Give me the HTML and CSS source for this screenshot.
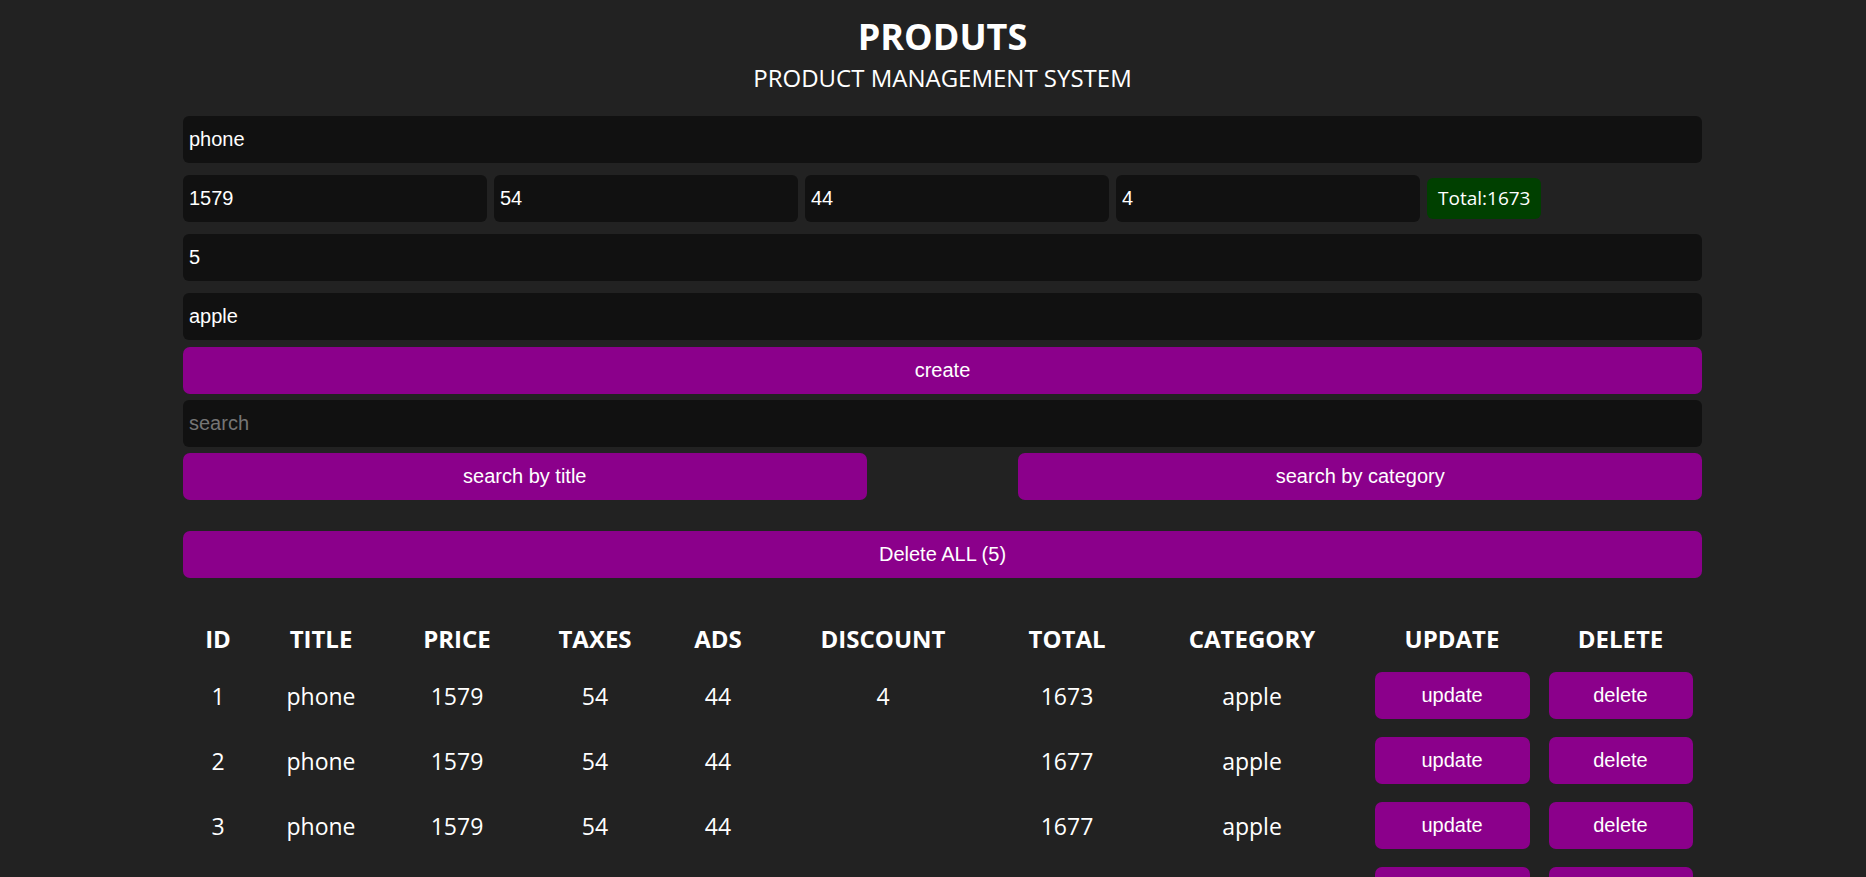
FILE: index.html
```html
<!DOCTYPE html>
<html lang="en">
<head>
<meta charset="UTF-8">
<title>CRUD</title>
<link rel="stylesheet" href="styles.css">
</head>
<body>
<div class="crud">
  <div class="head">
    <h1 class="title">PRODUTS</h1>
    <p class="subtitle">PRODUCT MANAGEMENT SYSTEM</p>
  </div>
  <div class="inputs">
    <input class="field" type="text" value="phone" placeholder="title">
    <div class="price">
      <input class="field" type="number" value="1579" placeholder="price">
      <input class="field" type="number" value="54" placeholder="taxes">
      <input class="field" type="number" value="44" placeholder="ads">
      <input class="field" type="number" value="4" placeholder="discount">
      <small class="total">Total:1673</small>
    </div>
    <input class="field" type="number" value="5" placeholder="count">
    <input class="field" type="text" value="apple" placeholder="category">
  </div>
  <div class="actions">
    <button class="btn">create</button>
    <input class="field" type="text" placeholder="search">
    <div class="search-btns">
      <button class="btn">search by title</button>
      <button class="btn">search by category</button>
    </div>
  </div>
  <div class="delete-all">
    <button class="btn">Delete ALL (5)</button>
  </div>
  <table class="products">
    <colgroup>
      <col class="c-id"><col class="c-title"><col class="c-price"><col class="c-taxes"><col class="c-ads"><col class="c-discount"><col class="c-total"><col class="c-category"><col class="c-update"><col class="c-delete">
    </colgroup>
    <thead>
      <tr>
        <th>ID</th><th>TITLE</th><th>PRICE</th><th>TAXES</th><th>ADS</th><th>DISCOUNT</th><th>TOTAL</th><th>CATEGORY</th><th>UPDATE</th><th>DELETE</th>
      </tr>
    </thead>
    <tbody>
      <tr>
        <td>1</td><td>phone</td><td>1579</td><td>54</td><td>44</td><td>4</td><td>1673</td><td>apple</td>
        <td><button class="btn">update</button></td><td><button class="btn">delete</button></td>
      </tr>
      <tr>
        <td>2</td><td>phone</td><td>1579</td><td>54</td><td>44</td><td></td><td>1677</td><td>apple</td>
        <td><button class="btn">update</button></td><td><button class="btn">delete</button></td>
      </tr>
      <tr>
        <td>3</td><td>phone</td><td>1579</td><td>54</td><td>44</td><td></td><td>1677</td><td>apple</td>
        <td><button class="btn">update</button></td><td><button class="btn">delete</button></td>
      </tr>
      <tr>
        <td>4</td><td>phone</td><td>1579</td><td>54</td><td>44</td><td></td><td>1677</td><td>apple</td>
        <td><button class="btn">update</button></td><td><button class="btn">delete</button></td>
      </tr>
      <tr>
        <td>5</td><td>phone</td><td>1579</td><td>54</td><td>44</td><td></td><td>1677</td><td>apple</td>
        <td><button class="btn">update</button></td><td><button class="btn">delete</button></td>
      </tr>
    </tbody>
  </table>
</div>
</body>
</html>
```
FILE: styles.css
```css
* {
  box-sizing: border-box;
}

html, body {
  margin: 0;
  padding: 0;
  background: #222222;
  color: #ffffff;
  font-family: "Open Sans", "Noto Sans", sans-serif;
  overflow: hidden;
}

.crud {
  width: 1519px;
  margin-left: 183px;
}

.head {
  padding-top: 12px;
  text-align: center;
}

.title {
  margin: 0;
  font-size: 36px;
  line-height: 49px;
  font-weight: 700;
}

.subtitle {
  margin: 0;
  font-size: 24px;
  line-height: 33px;
  font-weight: 400;
}

.inputs {
  margin-top: 22px;
  display: flex;
  flex-direction: column;
  gap: 12px;
}

.field {
  display: block;
  width: 100%;
  height: 47px;
  border: none;
  outline: none;
  border-radius: 6px;
  background: #111111;
  color: #ffffff;
  padding: 0 6px;
  font-family: "Liberation Sans", Arial, sans-serif;
  font-size: 20px;
}

.field::placeholder {
  color: #757575;
}

.field::-webkit-outer-spin-button,
.field::-webkit-inner-spin-button {
  -webkit-appearance: none;
  margin: 0;
}

.price {
  display: flex;
  align-items: center;
  gap: 7px;
}

.price .field {
  width: 304px;
  flex: none;
}

.total {
  display: inline-block;
  height: 41px;
  line-height: 41px;
  padding: 0 11px;
  border-radius: 6px;
  background: #004000;
  color: #ffffff;
  font-size: 19px;
}

.actions {
  margin-top: 7px;
  display: flex;
  flex-direction: column;
  gap: 6px;
}

.btn {
  display: block;
  width: 100%;
  height: 47px;
  border: none;
  border-radius: 7px;
  background: #8b008b;
  color: #ffffff;
  font-family: "Liberation Sans", Arial, sans-serif;
  font-size: 20px;
  cursor: pointer;
}

.search-btns {
  display: flex;
  justify-content: space-between;
}

.search-btns .btn {
  width: 45%;
}

.delete-all {
  margin-top: 31px;
}

.products {
  margin-top: 35px;
  width: 100%;
  table-layout: fixed;
  border-collapse: collapse;
  text-align: center;
}

.c-id { width: 70px; }
.c-title { width: 136px; }
.c-price { width: 136px; }
.c-taxes { width: 140px; }
.c-ads { width: 106px; }
.c-discount { width: 224px; }
.c-total { width: 144px; }
.c-category { width: 226px; }
.c-update { width: 174px; }
.c-delete { width: 163px; }

.products th {
  height: 50px;
  padding: 0;
  font-size: 24px;
  font-weight: 700;
  vertical-align: middle;
}

.products td {
  padding: 9px 9.5px;
  height: 65px;
  font-size: 23px;
  vertical-align: middle;
}
```
